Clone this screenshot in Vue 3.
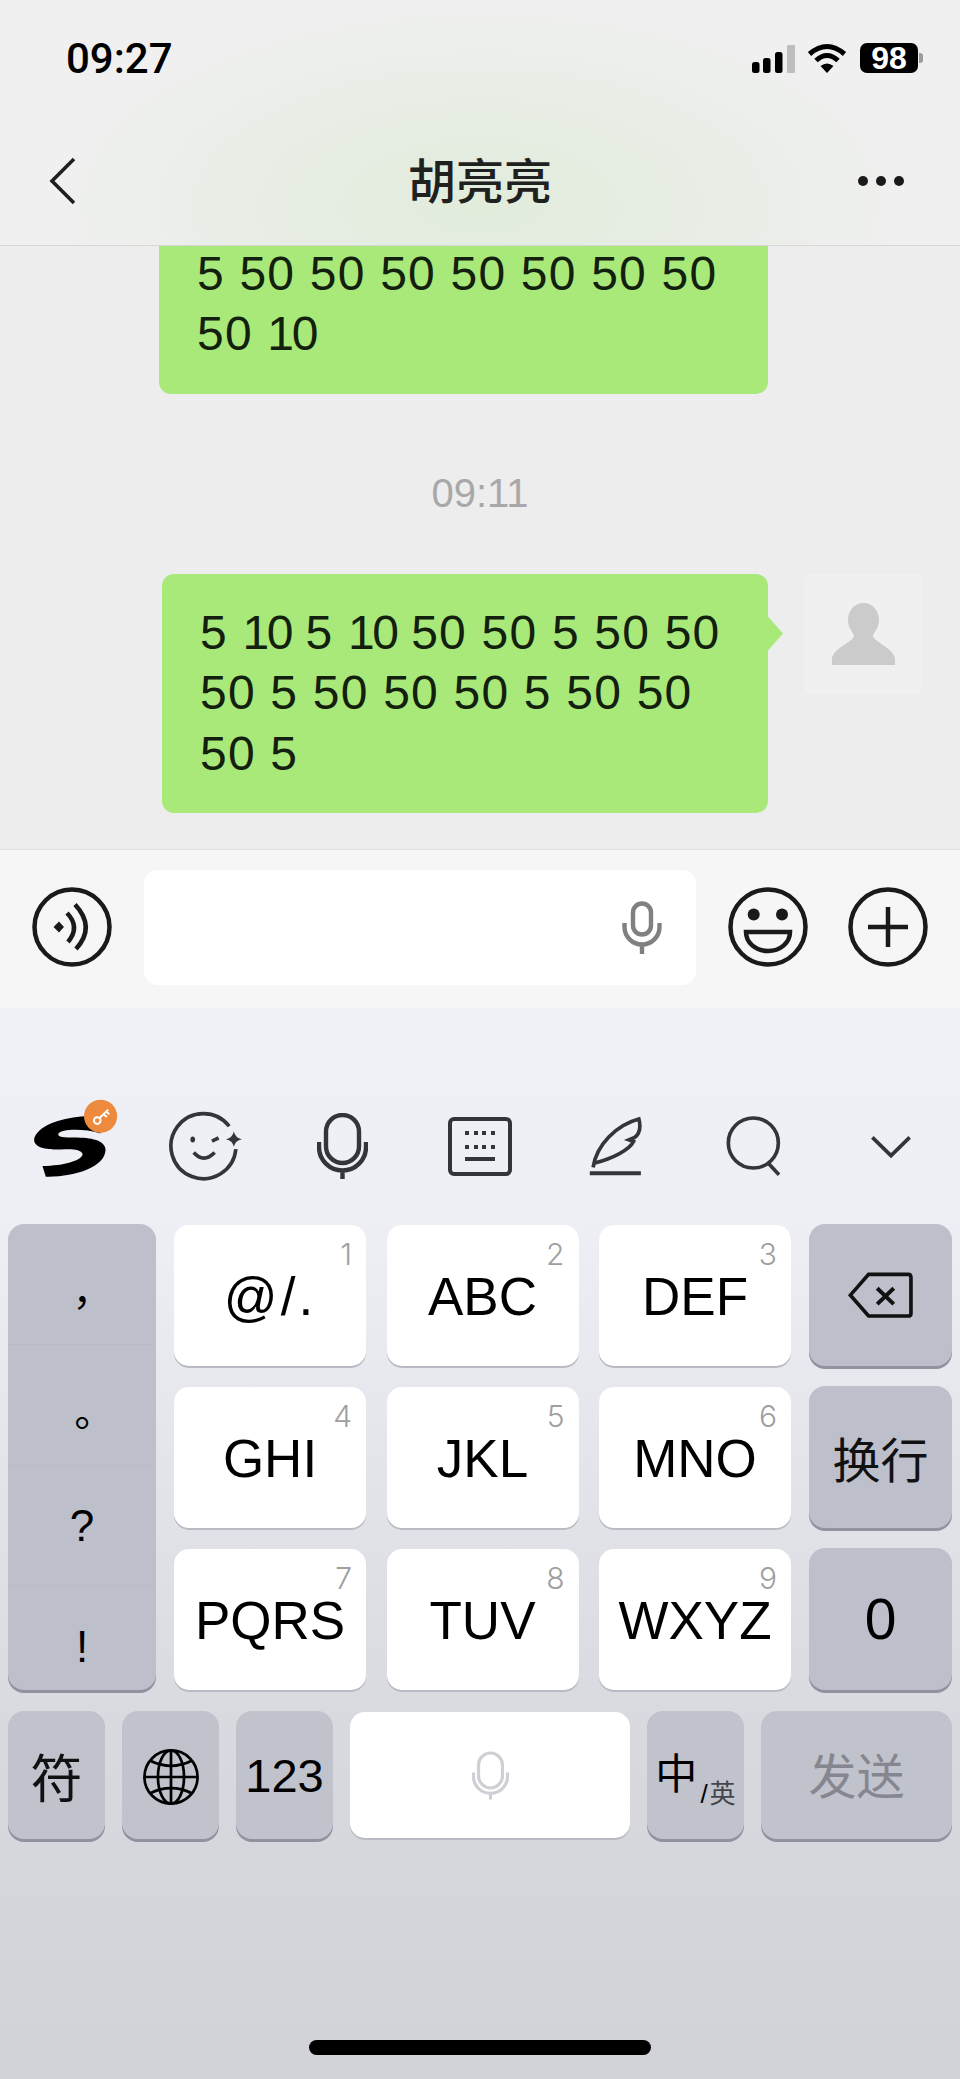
<template>
  <div class="phone">
    <header class="top">
      <div class="status">
        <span class="clock">09:27</span>
        <div class="status-icons">
          <svg class="signal" width="46" height="29" viewBox="0 0 46 29">
            <rect x="2" y="18" width="7.5" height="11" rx="2.5" fill="#000" />
            <rect x="13" y="14" width="7.5" height="15" rx="2.5" fill="#000" />
            <rect x="25" y="8" width="7.5" height="21" rx="2.5" fill="#000" />
            <rect x="37" y="1" width="8" height="28" rx="1" fill="#bcbfbc" />
          </svg>
          <svg class="wifi" width="40" height="30" viewBox="0 0 40 30">
            <path d="M2.5 11 Q20 -4 37.5 11" fill="none" stroke="#000" stroke-width="5" />
            <path d="M9 17.5 Q20 7.5 31 17.5" fill="none" stroke="#000" stroke-width="5" />
            <path d="M13.5 23 Q20 18 26.5 23 L20 30 Z" fill="#000" />
          </svg>
          <div class="battery">
            <span class="battery-level">98</span>
            <span class="battery-nub"></span>
          </div>
        </div>
      </div>
      <nav class="nav">
        <svg class="back" width="29" height="50" viewBox="0 0 29 50">
          <path d="M26 3 L4 25 L26 47" fill="none" stroke="#1f211f" stroke-width="3.6" />
        </svg>
        <h1 class="title">胡亮亮</h1>
        <svg class="more" width="50" height="12" viewBox="0 0 50 12">
          <circle cx="7" cy="6" r="5" fill="#1a1a1a" />
          <circle cx="25" cy="6" r="5" fill="#1a1a1a" />
          <circle cx="43" cy="6" r="5" fill="#1a1a1a" />
        </svg>
      </nav>
    </header>

    <main class="chat">
      <div class="row row-clipped">
        <div class="bubble bubble-wide">
          <div v-for="line in firstMessage" :key="line">
            <template v-for="(word, i) in line.split(' ')" :key="i">
              <span :class="{ ten: word === '10' }">{{ word }}</span>{{ ' ' }}
            </template>
          </div>
        </div>
      </div>
      <div class="time">09:11</div>
      <div class="row">
        <div class="bubble has-tail">
          <div v-for="line in secondMessage" :key="line">
            <template v-for="(word, i) in line.split(' ')" :key="i">
              <span :class="{ ten: word === '10' }">{{ word }}</span>{{ ' ' }}
            </template>
          </div>
        </div>
        <div class="avatar">
          <svg width="63" height="62" viewBox="0 0 63 62">
            <path
              d="M31.5 0 C22 0 16 8 16 17 C16 26 22 30 22 33 C22 38 2 45 0 55 V62 H63 V55 C61 45 41 38 41 33 C41 30 47 26 47 17 C47 8 41 0 31.5 0 Z"
              fill="#cbcbcb"
            />
          </svg>
        </div>
      </div>
    </main>

    <section class="input-bar">
      <svg class="round-btn" width="80" height="80" viewBox="0 0 80 80">
        <circle cx="40" cy="40" r="37.5" fill="none" stroke="#1a1a1a" stroke-width="4.5" />
        <path d="M21.5 40 L27 34.5 L32 40 L27 45.5 Z" fill="#1a1a1a" />
        <path d="M35 26 Q48.6 40 36 55" fill="none" stroke="#1a1a1a" stroke-width="4.5" />
        <path d="M43 17.5 Q64 40 44 62" fill="none" stroke="#1a1a1a" stroke-width="4.5" />
      </svg>
      <div class="text-field">
        <svg class="mic field-mic" viewBox="0 0 40 53">
          <rect x="11" y="2.5" width="18" height="31" rx="9" />
          <path d="M2.5 22 V26 A17.5 17.5 0 0 0 37.5 26 V22 M20 44 V53" />
        </svg>
      </div>
      <svg class="round-btn" width="80" height="80" viewBox="0 0 80 80">
        <circle cx="40" cy="40" r="37.5" fill="none" stroke="#1a1a1a" stroke-width="4.5" />
        <circle cx="25.7" cy="27.5" r="6" fill="#1a1a1a" />
        <circle cx="54" cy="27.5" r="6" fill="#1a1a1a" />
        <path d="M18 45 H62 C62 56 52 64 40 64 C28 64 18 56 18 45 Z" fill="none" stroke="#1a1a1a" stroke-width="4.5" />
      </svg>
      <svg class="round-btn plus-btn" width="80" height="80" viewBox="0 0 80 80">
        <circle cx="40" cy="40" r="37.5" fill="none" stroke="#1a1a1a" stroke-width="4.5" />
        <path d="M40 20 V60 M20 40 H60" fill="none" stroke="#1a1a1a" stroke-width="4.5" />
      </svg>
    </section>

    <section class="keyboard">
      <div class="toolbar">
        <svg class="logo" width="90" height="83" viewBox="90 50 270 250">
          <path
            d="M252 108 C190 112 118 130 100 172 C92 200 130 210 180 208 C215 206 240 208 245 222 C245 240 190 258 124 258 L134 290 C220 292 312 262 314 210 C314 180 270 172 220 172 C190 172 168 172 172 160 C180 148 240 142 300 160 Z"
            fill="#000"
          />
          <circle cx="299" cy="108" r="50" fill="#ee8a3e" />
          <circle cx="289" cy="121" r="10" fill="none" stroke="#fff" stroke-width="6" />
          <path d="M296 113 L322 88 M308 102 L318 110 M316 94 L325 102" fill="none" stroke="#fff" stroke-width="6" />
        </svg>
        <svg width="75" height="73" viewBox="505 90 225 220">
          <path d="M689 139 A98 98 0 1 0 709 208" class="tool-line" />
          <path d="M703 155 Q707 174 727 178 Q707 182 703 201 Q699 182 679 178 Q699 174 703 155 Z" fill="#33353b" />
          <ellipse cx="579" cy="179" rx="7" ry="9" fill="#33353b" />
          <path d="M637 184 L657 174 M582 218 Q612 252 645 218" class="tool-line" />
        </svg>
        <svg class="mic tool-mic" viewBox="0 0 51 66">
          <rect x="9" y="2" width="33" height="48" rx="16.5" />
          <path d="M2 29 V34 A23.5 23.5 0 0 0 49 34 V29 M25.5 58 V66" />
        </svg>
        <svg width="64" height="59" viewBox="0 0 64 59">
          <rect x="2" y="2" width="60" height="55" rx="4" fill="none" stroke="#33353b" stroke-width="4" />
          <path
            d="M17 14 h4 v4 h-4 Z M26 14 h4 v4 h-4 Z M34 14 h4 v4 h-4 Z M43 14 h4 v4 h-4 Z M17 28 h4 v4 h-4 Z M26 28 h4 v4 h-4 Z M34 28 h4 v4 h-4 Z M43 28 h4 v4 h-4 Z M17 40 h30 v4 h-30 Z"
            fill="#33353b"
          />
        </svg>
        <svg class="feather" width="55" height="63" viewBox="325 100 165 190">
          <path
            d="M340 258 C350 190 410 130 478 112 C484 135 482 155 465 168 L448 175 L462 180 C450 205 400 230 345 245"
            class="tool-line"
          />
          <path d="M330 276 H484" class="tool-line tool-thick" />
        </svg>
        <svg width="60" height="65" viewBox="730 100 180 195">
          <circle cx="818" cy="187" r="75" class="tool-line" />
          <path d="M865 250 L895 282" class="tool-line" />
        </svg>
        <svg width="44" height="25" viewBox="1170 160 132 75">
          <path d="M1180 170 L1236 225 L1292 170" class="tool-line" />
        </svg>
      </div>

      <div class="keys">
        <div class="key-gray punct-col">
          <div v-for="p in punctuation" :key="p.char" class="punct" :class="p.cls">{{ p.char }}</div>
        </div>

        <div class="letter-grid">
          <div v-for="k in letterKeys" :key="k.num" class="key-white letter-key">
            <span class="hint">{{ k.num }}</span>
            <span class="letters" :class="{ 'letters-wide': k.num === 1 }">{{ k.label }}</span>
          </div>
        </div>

        <div class="action-col">
          <div class="key-gray action-key">
            <svg width="68" height="49" viewBox="1095 580 205 148">
              <path
                d="M1160 590 H1280 Q1288 590 1288 600 V708 Q1288 716 1280 716 H1160 L1105 653 Z"
                fill="none"
                stroke="#111"
                stroke-width="11"
              />
              <path d="M1186 632 L1236 680 M1236 632 L1186 680" fill="none" stroke="#111" stroke-width="12" />
            </svg>
          </div>
          <div class="key-gray action-key cjk-label">换行</div>
          <div class="key-gray action-key zero">0</div>
        </div>
      </div>

      <div class="bottom-row">
        <div class="key-gray small-key symbol-key">符</div>
        <div class="key-gray small-key globe-key">
          <svg width="58" height="58" viewBox="0 0 60 60">
            <g fill="none" stroke="#000" stroke-width="2.8">
              <circle cx="30" cy="30" r="27.5" />
              <ellipse cx="30" cy="30" rx="13.5" ry="27.5" />
              <path d="M30 2.5 V57.5 M2.5 30 H57.5" />
              <path d="M8 13 Q30 24 52 13 M8 47 Q30 36 52 47" />
            </g>
          </svg>
        </div>
        <div class="key-gray small-key num-key">123</div>
        <div class="key-white space-key">
          <svg class="mic space-mic" viewBox="0 0 51 66">
            <rect x="9" y="2" width="33" height="48" rx="16.5" />
            <path d="M2 29 V34 A23.5 23.5 0 0 0 49 34 V29 M25.5 58 V66" />
          </svg>
        </div>
        <div class="key-gray small-key lang-key">
          <span class="lang-main">中</span><span class="lang-slash">/</span><span class="lang-sub">英</span>
        </div>
        <div class="key-gray send-key cjk-label">发送</div>
      </div>

      <div class="home-bar"></div>
    </section>
  </div>
</template>

<script setup>
const firstMessage = ['5 50 50 50 50 50 50 50', '50 10']
const secondMessage = ['5 10 5 10 50 50 5 50 50', '50 5 50 50 50 5 50 50', '50 5']

const punctuation = [
  { char: '，', cls: 'p-comma' },
  { char: '。', cls: 'p-stop' },
  { char: '?', cls: 'p-question' },
  { char: '!', cls: 'p-bang' }
]

const letterKeys = [
  { num: 1, label: '@/.' },
  { num: 2, label: 'ABC' },
  { num: 3, label: 'DEF' },
  { num: 4, label: 'GHI' },
  { num: 5, label: 'JKL' },
  { num: 6, label: 'MNO' },
  { num: 7, label: 'PQRS' },
  { num: 8, label: 'TUV' },
  { num: 9, label: 'WXYZ' }
]
</script>

<style>
html,
body {
  margin: 0;
  background: #d1d2d8;
}
</style>

<style scoped>
.phone {
  width: 960px;
  height: 2079px;
  display: flex;
  flex-direction: column;
  overflow: hidden;
  font-family: "Liberation Sans", "Noto Sans CJK SC", sans-serif;
  color: #000;
}

/* header */
.top {
  height: 246px;
  flex: none;
  box-sizing: border-box;
  border-bottom: 1px solid #d6d7d6;
  background: radial-gradient(ellipse 420px 200px at 50% 205px, #e1ecdb 0%, #e8ede5 55%, #eff0ef 100%);
}
.status {
  height: 116px;
  display: flex;
  align-items: center;
  justify-content: space-between;
  padding: 0 37px 0 66px;
}
.clock {
  font-family: Roboto, "Liberation Sans", sans-serif;
  font-size: 42px;
  font-weight: 500;
}
.status-icons {
  display: flex;
  align-items: center;
}
.wifi {
  margin-left: 11px;
}
.battery {
  display: flex;
  align-items: center;
  margin-left: 13px;
}
.battery-level {
  width: 58px;
  height: 30px;
  border-radius: 7px;
  background: #000;
  color: #fff;
  font-size: 32px;
  font-weight: 700;
  line-height: 30px;
  text-align: center;
}
.battery-nub {
  width: 4px;
  height: 10px;
  margin-left: 1px;
  border-radius: 0 3px 3px 0;
  background: #9c9c9c;
}
.nav {
  height: 129px;
  display: grid;
  grid-template-columns: 1fr auto 1fr;
  align-items: center;
  padding: 0 54px;
}
.back {
  margin-left: -6px;
}
.more {
  justify-self: end;
}
.title {
  margin: 0 0 6px;
  font-size: 48px;
  font-weight: 500;
  color: #1f211f;
}

/* messages */
.chat {
  flex: 1;
  min-height: 0;
  display: flex;
  flex-direction: column;
  justify-content: flex-end;
  overflow: hidden;
  padding-bottom: 36px;
  background: #ededed;
}
.row {
  flex: none;
  display: flex;
  justify-content: flex-end;
  align-items: flex-start;
  padding-right: 37px;
}
.row-clipped {
  padding-right: 192px;
}
.bubble {
  position: relative;
  box-sizing: border-box;
  width: 606px;
  padding: 29px 38px;
  border-radius: 12px;
  background: #a9e97a;
  color: #13200e;
  font-size: 48px;
  letter-spacing: 1.2px;
  line-height: 60.5px;
  white-space: nowrap;
}
.bubble-wide {
  width: 609px;
}
.ten {
  letter-spacing: -2.4px;
}
.has-tail::after {
  content: "";
  position: absolute;
  top: 43px;
  right: -15px;
  width: 15px;
  height: 34px;
  background: #a9e97a;
  clip-path: polygon(0 0, 100% 50%, 0 100%);
}
.avatar {
  width: 119px;
  height: 120px;
  margin-left: 36px;
  display: flex;
  align-items: center;
  justify-content: center;
  border-radius: 8px;
  background: #f0f0f0;
}
.time {
  flex: none;
  height: 160px;
  padding-top: 20px;
  display: flex;
  align-items: center;
  justify-content: center;
  font-size: 40px;
  color: #a8a8a8;
}

/* input bar */
.input-bar {
  flex: none;
  height: 159px;
  box-sizing: border-box;
  display: flex;
  align-items: center;
  gap: 32px;
  padding: 0 0 4px 32px;
  border-top: 1px solid #e0e0e0;
  background: #f6f6f6;
}
.round-btn {
  flex: none;
}
.plus-btn {
  margin-left: 8px;
}
.text-field {
  width: 552px;
  height: 115px;
  display: flex;
  align-items: center;
  justify-content: flex-end;
  padding-right: 34px;
  box-sizing: border-box;
  border-radius: 14px;
  background: #fff;
}
.mic rect,
.mic path {
  fill: none;
  stroke: currentColor;
  stroke-width: 4.4;
}
.field-mic {
  width: 40px;
  height: 53px;
  color: #808080;
}
.tool-mic {
  width: 51px;
  height: 66px;
  color: #33353b;
}
.space-mic {
  width: 37px;
  height: 49px;
  color: #cfd0d5;
}

/* keyboard */
.keyboard {
  flex: none;
  height: 1071px;
  display: flex;
  flex-direction: column;
  padding-top: 88px;
  box-sizing: border-box;
  background: linear-gradient(#f0f1f6 0%, #eeeff4 20%, #e6e7ec 38%, #d8dae0 66%, #d1d2d8 100%);
}
.toolbar {
  height: 100px;
  margin-bottom: 28px;
  display: grid;
  grid-template-columns: repeat(7, 1fr);
  align-items: center;
  justify-items: center;
}
.logo {
  margin: 0 0 16px 14px;
}
.feather {
  margin-right: 4px;
}
.tool-line {
  fill: none;
  stroke: #33353b;
  stroke-width: 11;
}
.tool-thick {
  stroke-width: 12;
}
.keys {
  height: 466px;
  flex: none;
  display: flex;
  padding: 0 8px;
}
.key-gray {
  border-radius: 16px;
  background: #bdbfcb;
  box-shadow: 0 3px 0 #9092a0;
}
.key-white {
  border-radius: 15px;
  background: #fff;
  box-shadow: 0 2px 0 #b8bac4;
}
.punct-col {
  width: 148px;
  flex: none;
  display: flex;
  flex-direction: column;
}
.punct {
  display: flex;
  align-items: center;
  justify-content: center;
  box-sizing: border-box;
  font-size: 44px;
}
.p-comma,
.p-stop {
  font-family: "Noto Sans CJK TC", sans-serif;
  font-size: 40px;
  height: 121px;
  padding-top: 32px;
  border-bottom: 1px solid #b9bbc7;
}
.p-question {
  height: 120px;
  border-bottom: 1px solid #b9bbc7;
}
.p-bang {
  flex: 1;
  padding-top: 18px;
}
.letter-grid {
  width: 617px;
  flex: none;
  margin: 1px 18px 0;
  display: grid;
  grid-template-columns: repeat(3, 1fr);
  grid-template-rows: repeat(3, 1fr);
  gap: 21px 20.5px;
}
.letter-key {
  position: relative;
  display: flex;
  align-items: center;
  justify-content: center;
  padding-top: 2px;
}
.letters {
  font-size: 53px;
}
.letters-wide {
  letter-spacing: 3px;
}
.hint {
  position: absolute;
  top: 11px;
  right: 14px;
  font-family: Inter, "Liberation Sans", sans-serif;
  font-size: 30px;
  font-weight: 300;
  color: #9f9f9f;
}
.action-col {
  width: 143px;
  flex: none;
  display: grid;
  grid-template-rows: repeat(3, 1fr);
  gap: 20px;
}
.action-key {
  display: flex;
  align-items: center;
  justify-content: center;
}
.cjk-label {
  font-size: 48px;
  color: #111;
}
.zero {
  font-size: 57px;
}
.bottom-row {
  height: 128px;
  flex: none;
  margin-top: 21px;
  padding: 0 8px;
  display: flex;
  gap: 17px;
}
.small-key {
  width: 97px;
  flex: none;
  display: flex;
  align-items: center;
  justify-content: center;
  background: #c0c2cc;
}
.symbol-key {
  font-size: 52px;
  color: #111;
}
.globe-key {
  padding-top: 4px;
  box-sizing: border-box;
}
.num-key {
  font-size: 47px;
}
.space-key {
  width: 280px;
  height: 126px;
  margin-top: 1px;
  display: flex;
  align-items: center;
  justify-content: center;
}
.lang-key {
  align-items: flex-end;
  padding-bottom: 30px;
  box-sizing: border-box;
  color: #000;
}
.lang-main {
  font-size: 42px;
  line-height: 56px;
  margin-bottom: 6px;
}
.lang-slash {
  margin-left: 3px;
  font-size: 26px;
  line-height: 30px;
}
.lang-sub {
  margin-left: 2px;
  font-size: 26px;
  line-height: 30px;
  color: #44454c;
}
.send-key {
  width: 191px;
  flex: none;
  box-sizing: border-box;
  padding-bottom: 4px;
  display: flex;
  align-items: center;
  justify-content: center;
  background: #c0c2cc;
  color: #85868f;
}
.home-bar {
  width: 342px;
  height: 15px;
  flex: none;
  margin: auto auto 24px;
  border-radius: 8px;
  background: #000;
}
</style>
